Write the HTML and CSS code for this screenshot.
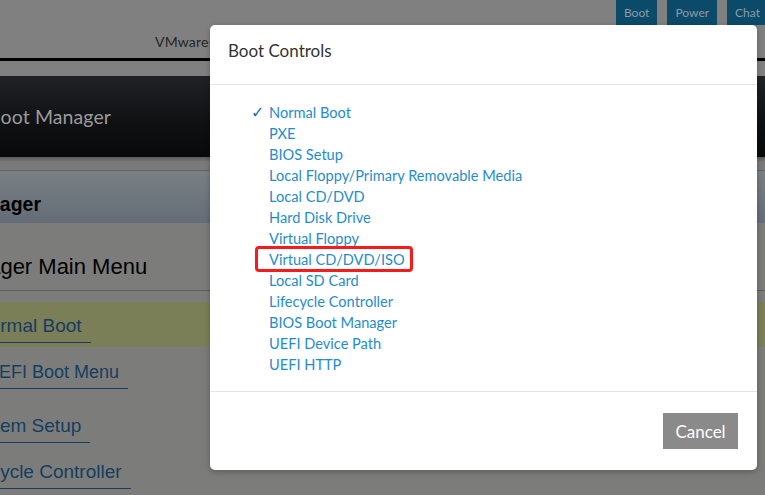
FILE: index.html
```html
<!DOCTYPE html>
<html lang="en">
<head>
<meta charset="utf-8">
<title>Boot Controls</title>
<link rel="stylesheet" href="styles.css">
</head>
<body>
<div class="page">
  <div class="topbar">
    <span class="tbtn">Boot</span>
    <span class="tbtn">Power</span>
    <span class="tbtn">Chat</span>
  </div>
  <div class="infobar"><span class="host">VMware-42 1d 7a 3c 9e 55 b2 10-84 6f 21 aa 0c d3 e7 9b, User: root, 12 fps <span class="tail">)</span></span></div>
  <div class="rule"></div>
  <div class="strip"></div>
  <div class="banner"><span class="banner-text">Boot Manager</span></div>
  <div class="strip2"></div>
  <div class="panel-head"><span class="panel-head-text">Boot Manager</span></div>
  <div class="panel-title"><span class="panel-title-text">Boot Manager Main Menu</span></div>
  <div class="menu">
    <div class="mitem active"><span class="mlink off-normal">Normal Boot</span></div>
    <div class="mitem second"><span class="mlink off-uefi">UEFI Boot Menu</span></div>
    <div class="mitem third"><span class="mlink off-setup">System Setup</span></div>
    <div class="mitem fourth"><span class="mlink off-lc">Lifecycle Controller</span></div>
  </div>
</div>

<div class="modal">
  <div class="modal-header"><h4 class="modal-title">Boot Controls</h4></div>
  <div class="modal-body">
    <ul class="boot-list">
      <li class="selected"><span class="check">✓</span>Normal Boot</li>
      <li>PXE</li>
      <li>BIOS Setup</li>
      <li>Local Floppy/Primary Removable Media</li>
      <li>Local CD/DVD</li>
      <li>Hard Disk Drive</li>
      <li>Virtual Floppy</li>
      <li><span class="marked">Virtual CD/DVD/ISO</span></li>
      <li>Local SD Card</li>
      <li>Lifecycle Controller</li>
      <li>BIOS Boot Manager</li>
      <li>UEFI Device Path</li>
      <li>UEFI HTTP</li>
    </ul>
  </div>
  <div class="modal-footer"><button class="btn-cancel">Cancel</button></div>
</div>
</body>
</html>
```
FILE: styles.css
```css
html, body {
  margin: 0;
  padding: 0;
}
body {
  width: 765px;
  height: 495px;
  overflow: hidden;
  position: relative;
  background: #7c7d7b;
  font-family: Lato, "Open Sans", sans-serif;
}
.page {
  width: 765px;
  overflow: hidden;
}
.topbar {
  height: 25px;
  background: #808080;
  display: flex;
  justify-content: flex-end;
  gap: 10px;
  margin-right: -3px;
}
.tbtn {
  background: #0c4a6a;
  color: #8c9ba4;
  font-size: 12px;
  line-height: 25px;
  padding: 0 8px;
}
.infobar {
  height: 33px;
  background: #808080;
  padding-left: 155px;
  white-space: nowrap;
  overflow: hidden;
}
.host {
  font-size: 14px;
  line-height: 34px;
  color: #262626;
  letter-spacing: 0.2px;
}
.tail {
  color: #1d4f74;
}
.rule {
  height: 3px;
  background: #000;
}
.strip {
  height: 15px;
  background: #808080;
}
.banner {
  height: 81px;
  background: linear-gradient(#202226, #0f1012 60%, #080909);
  display: flex;
  align-items: center;
}
.banner-text {
  margin-left: -12px;
  font-size: 19.5px;
  color: #9b9b9b;
  font-weight: 400;
  letter-spacing: 0.1px;
}
.strip2 {
  height: 13px;
  background: linear-gradient(#5a5a5a, #7a7a7a 5px, #7b7b7b);
}
.panel-head {
  height: 52px;
  border-top: 1px solid #5f646a;
  background: linear-gradient(#7a8084, #646d77);
  display: flex;
  align-items: center;
  white-space: nowrap;
  font-family: "Liberation Sans", Arial, sans-serif;
}
.panel-head-text {
  margin-left: -89px;
  font-size: 19.5px;
  font-weight: bold;
  color: #000;
  padding-top: 14px;
}
.panel-title {
  height: 67px;
  border-bottom: 1px solid #5c5c5c;
  background: #7c7d7b;
  display: flex;
  align-items: center;
  white-space: nowrap;
  font-family: "Liberation Sans", Arial, sans-serif;
}
.panel-title-text {
  margin-left: -106px;
  font-size: 22px;
  color: #000;
  padding-top: 20px;
}
.menu {
  padding-top: 11px;
  font-family: "Liberation Sans", Arial, sans-serif;
  white-space: nowrap;
}
.mitem {
  height: 40px;
}
.mitem.active {
  background: #7b7f58;
  height: 32px;
  padding-top: 13px;
}
.mitem.second { margin-top: 14px; height: 40px; }
.mitem.third { margin-top: 14px; height: 40px; }
.mitem.fourth { margin-top: 6px; height: 40px; }
.mlink {
  display: inline-block;
  font-size: 19px;
  line-height: 22px;
  color: #153d60;
  padding-right: 9px;
  padding-bottom: 5px;
  border-bottom: 1px solid #173d60;
}
.off-normal { margin-left: -24px; }
.off-uefi { margin-left: -14px; font-size: 18px; }
.off-setup { margin-left: -37px; }
.off-lc { margin-left: -40px; }

.modal {
  position: absolute;
  left: 210px;
  top: 25px;
  width: 547px;
  height: 445px;
  background: #fff;
  border-radius: 5px;
  box-shadow: 0 2px 6px rgba(0, 0, 0, 0.25);
  display: flex;
  flex-direction: column;
  font-family: Lato, "Open Sans", sans-serif;
}
.modal-header {
  height: 60px;
  box-sizing: border-box;
  padding: 14px 18px 22px;
  border-bottom: 1px solid #e5e5e5;
}
.modal-title {
  margin: 0;
  font-size: 17px;
  line-height: 24px;
  font-weight: 400;
  color: #333;
}
.modal-body {
  padding: 17px 0 16px 59px;
  border-bottom: 1px solid #e5e5e5;
}
.boot-list {
  list-style: none;
  margin: 0;
  padding: 0;
}
.boot-list li {
  font-size: 14.6px;
  line-height: 21px;
  color: #1f8dcd;
  position: relative;
}
.check {
  position: absolute;
  left: -18px;
  top: 0;
  color: #1b6db2;
  font-family: "DejaVu Sans", sans-serif;
  font-size: 16px;
  font-weight: bold;
  line-height: 21px;
}
.marked {
  position: relative;
  display: inline-block;
  line-height: 21px;
}
.marked::after {
  content: "";
  position: absolute;
  left: -14px;
  right: -8px;
  top: -3px;
  bottom: -2px;
  border: 3px solid #f71c1c;
  border-radius: 4px;
}
.modal-footer {
  flex: 1;
  display: flex;
  justify-content: flex-end;
  align-items: flex-start;
  padding: 21px 19px 0 0;
}
.btn-cancel {
  background: #8a8a8a;
  color: #fff;
  border: none;
  border-radius: 0;
  height: 36px;
  width: 75px;
  font-family: Lato, "Open Sans", sans-serif;
  font-size: 17px;
  padding: 0;
}
```
